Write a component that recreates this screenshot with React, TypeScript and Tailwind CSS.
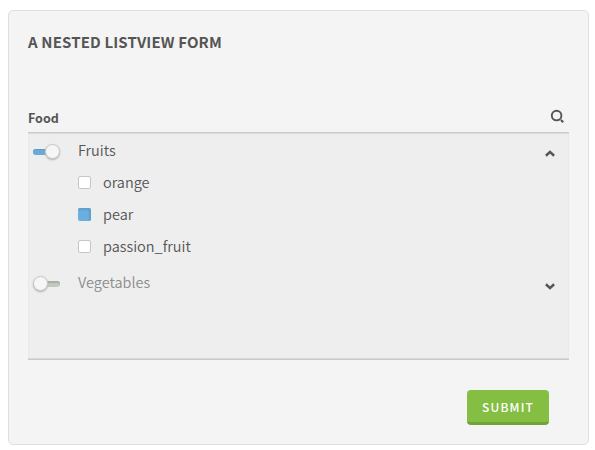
import { useState } from 'react';

function Toggle({ on, onClick, label }: { on: boolean; onClick: () => void; label: string }) {
  return (
    <button
      type="button"
      aria-label={label}
      aria-pressed={on}
      onClick={onClick}
      className={`flex h-[15px] w-[27px] shrink-0 items-center ${on ? 'justify-end' : 'justify-start'}`}
    >
      {on && <span className="-mr-1 h-1.5 flex-1 rounded-l-[3px] bg-[#69aadb] shadow-[inset_0_1px_1px_#5b9dce]" />}
      <span className="z-10 size-[15px] shrink-0 rounded-full border border-[#c8c8c8] bg-[#f6f6f6] shadow-[0_1px_2px_#b0b0b0]" />
      {!on && <span className="-ml-1 h-1.5 flex-1 rounded-r-[3px] bg-[#c3c9bf] shadow-[inset_0_2px_1px_#a3b3a3]" />}
    </button>
  );
}

function Chevron({ up }: { up?: boolean }) {
  return (
    <svg width="10" height="7" viewBox="0 0 10 7" fill="none" stroke="#555" strokeWidth="2.6" className="shrink-0">
      <path d={up ? 'M.9 5.7 5 1.9l4.1 3.8' : 'M.9 1.3 5 5.1l4.1-3.8'} />
    </svg>
  );
}

const fruits = ['orange', 'pear', 'passion_fruit'];

export default function App() {
  const [fruitOn, setFruitOn] = useState(true);
  const [vegOn, setVegOn] = useState(false);
  const [picked, setPicked] = useState<string[]>(['pear']);
  const flip = (name: string) =>
    setPicked((p) => (p.includes(name) ? p.filter((n) => n !== name) : [...p, name]));

  return (
    <div className="h-[450px] w-[595px] bg-white pt-2.5 pl-2 font-['Noto_Sans_CJK_SC',sans-serif] text-[#555]">
      <form
        onSubmit={(e) => e.preventDefault()}
        className="flex h-[435px] w-[581px] flex-col rounded-[5px] border border-[#dfdfdf] bg-[#f4f4f4] pr-[19px] pl-[19px]"
      >
        <h1 className="mt-[21px] h-5 text-[15px] leading-5 font-bold tracking-[0.13px] whitespace-nowrap">
          A NESTED LISTVIEW FORM
        </h1>
        <div className="mt-[55px] flex h-[25px] justify-between">
          <span className="mt-[1px] text-[12.5px] leading-5 font-bold">Food</span>
          <svg width="15" height="15" viewBox="0 0 15 15" fill="none" stroke="#555" strokeWidth="1.9" className="mt-0.5 mr-1">
            <circle cx="6.6" cy="6.6" r="4.8" />
            <path d="m11 11 2.2 2.2" strokeWidth="2.2" />
          </svg>
        </div>
        <div className="h-[228px] border-y border-t-[#cacaca] border-b-[#c9c9c9] bg-[#eee] font-[350] shadow-[inset_0_1px_1px_#d9d9d9,inset_0_-1px_1px_#d9d9d9]">
          <div className="flex h-[33px] items-start pt-[5px] pr-3.5 pl-[5px]">
            <div className="flex pt-[6px]">
              <Toggle on={fruitOn} onClick={() => setFruitOn(!fruitOn)} label="Fruits" />
            </div>
            <span className="ml-[18px] flex-1 text-[14.5px] leading-6">Fruits</span>
            <div className="pt-3">
              <Chevron up />
            </div>
          </div>
          {fruits.map((name) => (
            <div key={name} className="flex h-8 items-center pl-[50px]">
              <button
                type="button"
                aria-label={name}
                onClick={() => flip(name)}
                className={`size-[13px] shrink-0 rounded-[2px] ${
                  picked.includes(name)
                    ? 'bg-[#6cafdf] shadow-[inset_-2px_2px_2px_#5d9fce]'
                    : 'border border-[#c6c6c6] bg-white'
                }`}
              />
              <span className="ml-3 text-[14.5px] leading-6">{name}</span>
            </div>
          ))}
          <div className="flex h-10 items-start pt-2 pr-3.5 pl-[5px]">
            <div className="flex pt-[6px]">
              <Toggle on={vegOn} onClick={() => setVegOn(!vegOn)} label="Vegetables" />
            </div>
            <span className="ml-[18px] flex-1 text-[14.5px] leading-6 text-[#8c8c8c]">Vegetables</span>
            <div className="pt-[13px]">
              <Chevron />
            </div>
          </div>
        </div>
        <button
          type="submit"
          className="mt-[30px] mr-5 h-[35px] w-[82px] self-end rounded-[4px] border-b-3 border-[#71a335] bg-[#84be43] pt-px text-[12px] leading-[31px] font-medium tracking-[1.15px] text-white"
        >
          SUBMIT
        </button>
      </form>
    </div>
  );
}
